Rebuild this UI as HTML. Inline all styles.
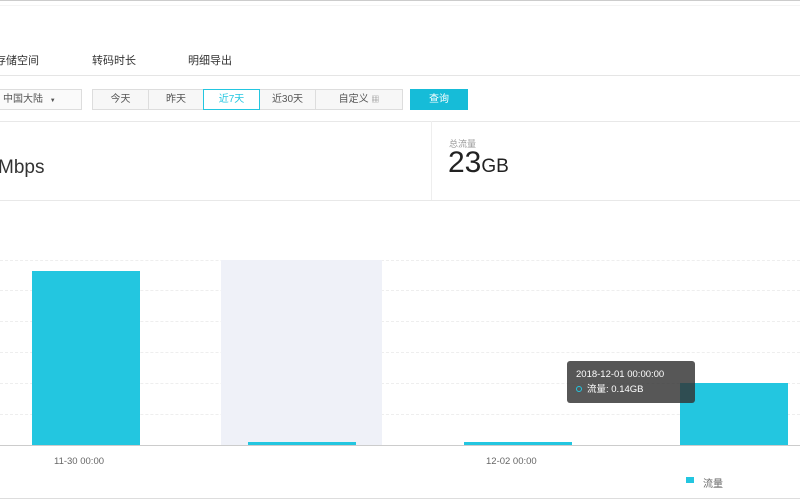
<!DOCTYPE html>
<html><head><meta charset="utf-8"><style>
*{margin:0;padding:0;box-sizing:border-box}
body{width:800px;height:500px;overflow:hidden;background:#fff;font-family:"Liberation Sans","Noto Sans CJK SC",sans-serif;color:#333;position:relative}
.a{position:absolute}
.t{font-size:11px;color:#333}
.btn{position:absolute;top:89px;height:21px;border:1px solid #ddd;background:#f7f7f7;font-size:10px;line-height:19px;text-align:center;color:#555}
.grid{position:absolute;left:0;width:800px;border-top:1px dashed #eee}
.bar{position:absolute;background:#23c6e0}
</style></head><body>
<div class="a" style="left:0;top:0;width:800px;height:1px;background:#ccc"></div>
<div class="a" style="left:0;top:5px;width:800px;height:1px;background:#f4f4f4"></div>
<div class="a t" style="left:-5px;top:52px">存储空间</div>
<div class="a t" style="left:92px;top:52px">转码时长</div>
<div class="a t" style="left:188px;top:52px">明细导出</div>
<div class="a" style="left:0;top:75px;width:800px;height:1px;background:#e5e5e5"></div>

<div class="btn" style="left:-2px;width:84px;text-align:left;padding-left:4px;background:#fafafa">中国大陆 <span style="font-size:6px;margin-left:4px">▼</span></div>
<div class="btn" style="left:92px;width:57px">今天</div>
<div class="btn" style="left:148px;width:56px">昨天</div>
<div class="btn" style="left:259px;width:57px">近30天</div>
<div class="btn" style="left:315px;width:88px">自定义 <span style="font-size:8px;color:#888">▦</span></div>
<div class="btn" style="left:203px;width:57px;border-color:#23c6e0;background:#fff;color:#23c6e0">近7天</div>
<div class="btn" style="left:410px;width:58px;border-color:#16bcd8;background:#16bcd8;color:#fff">查询</div>

<div class="a" style="left:0;top:121px;width:800px;height:1px;background:#e8e8e8"></div>
<div class="a" style="left:431px;top:121px;width:1px;height:79px;background:#eee"></div>
<div class="a" style="left:-2px;top:157px;font-size:19px;color:#333">Mbps</div>
<div class="a" style="left:449px;top:137px;font-size:9px;color:#999">总流量</div>
<div class="a" style="left:448px;top:146px;font-size:30px;color:#222">23<span style="font-size:19px">GB</span></div>
<div class="a" style="left:0;top:200px;width:800px;height:1px;background:#e8e8e8"></div>

<div class="grid" style="top:260px"></div>
<div class="grid" style="top:290px"></div>
<div class="grid" style="top:321px"></div>
<div class="grid" style="top:352px"></div>
<div class="grid" style="top:383px"></div>
<div class="grid" style="top:414px"></div>
<div class="a" style="left:221px;top:260px;width:161px;height:185px;background:#eff1f8"></div>
<div class="bar" style="left:32px;top:271px;width:108px;height:174px"></div>
<div class="bar" style="left:248px;top:442px;width:108px;height:3px"></div>
<div class="bar" style="left:464px;top:442px;width:108px;height:3px"></div>
<div class="bar" style="left:680px;top:383px;width:108px;height:62px"></div>
<div class="a" style="left:0;top:445px;width:800px;height:1px;background:#ccc"></div>
<div class="a" style="left:54px;top:456px;font-size:9.5px;color:#666">11-30 00:00</div>
<div class="a" style="left:486px;top:456px;font-size:9.5px;color:#666">12-02 00:00</div>

<div class="a" style="left:567px;top:361px;width:128px;height:42px;background:rgba(50,50,50,0.82);border-radius:3px;color:#fff;font-size:9.5px;padding:6px 0 0 9px;line-height:15px">2018-12-01 00:00:00<br><span style="display:inline-block;width:6px;height:6px;border:1.5px solid #23c6e0;border-radius:50%;margin-right:5px"></span>流量: 0.14GB</div>

<div class="a" style="left:686px;top:477px;width:8px;height:6px;background:#23c6e0"></div>
<div class="a" style="left:703px;top:475px;font-size:10px;color:#666">流量</div>
<div class="a" style="left:0;top:498px;width:800px;height:1px;background:#ddd"></div>
</body></html>
